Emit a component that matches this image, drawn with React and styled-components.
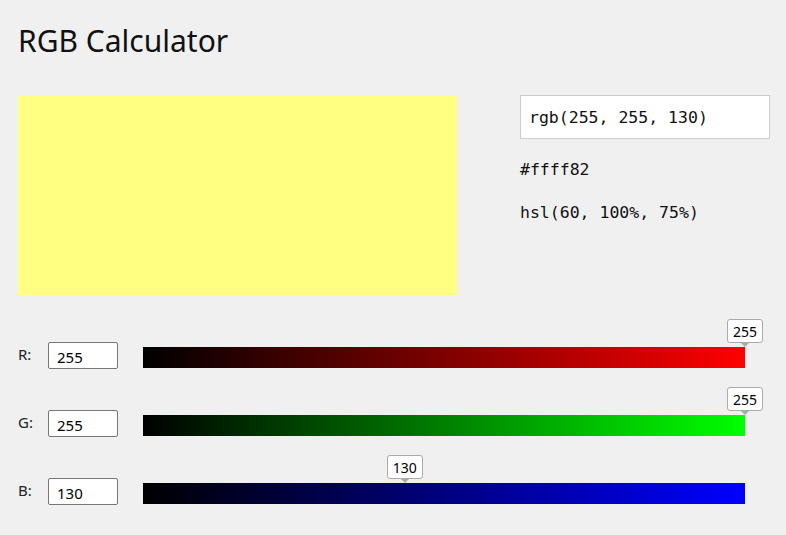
import { PureComponent } from "react";
import styled, { createGlobalStyle } from "styled-components";

const GlobalStyle = createGlobalStyle`
  html, body {
    margin: 0;
    padding: 0;
    background: #f0f0f0;
  }
  body {
    font-family: "Noto Sans", "Open Sans", sans-serif;
    color: #000;
  }
`;

const Page = styled.div`
  padding: 0 0 0 18px;
  width: 786px;
  height: 535px;
  box-sizing: border-box;
  overflow: hidden;
`;

const Title = styled.h1`
  margin: 0;
  padding-top: 21px;
  height: 74px;
  box-sizing: border-box;
  font-size: 30px;
  line-height: 40px;
  font-weight: 400;
  color: #111;
`;

const Top = styled.div`
  display: flex;
  align-items: flex-start;
  gap: 63px;
`;

const Preview = styled.div`
  flex-shrink: 0;
  margin-top: 22px;
  width: 439px;
  height: 199px;
  background: ${(props) => props.color};
`;

const Info = styled.div`
  flex-shrink: 0;
  margin-top: 21px;
  display: flex;
  flex-direction: column;
  font-family: "DejaVu Sans Mono", "Liberation Mono", monospace;
  font-size: 16.5px;
  color: #111;
`;

const RgbBox = styled.div`
  width: 250px;
  height: 44px;
  box-sizing: border-box;
  padding: 0 8px;
  display: flex;
  align-items: center;
  background: #fff;
  border: 1px solid #ccc;
`;

const InfoLine = styled.div`
  height: 43px;
  display: flex;
  align-items: center;
  margin-top: ${(props) => props.first ? "9px" : "0"};
`;

const Sliders = styled.div`
  margin-top: 47px;
  display: flex;
  flex-direction: column;
  gap: 41px;
`;

const Row = styled.div`
  display: flex;
  align-items: center;
  height: 27px;
`;

const Label = styled.span`
  width: 30px;
  font-size: 15px;
  color: #222;
  margin-top: -3px;
`;

const NumInput = styled.input`
  width: 70px;
  height: 27px;
  box-sizing: border-box;
  border: 1px solid #767676;
  border-radius: 2px;
  background: #fff;
  padding: 2px 8px 0;
  font-family: "Noto Sans", "Open Sans", sans-serif;
  font-size: 15px;
  color: #000;
  outline: none;
`;

const Track = styled.div`
  position: relative;
  margin-left: 25px;
  width: 602px;
  height: 21px;
  margin-top: 4px;
  background: linear-gradient(to right, #000, ${(props) => props.end});
`;

const Bubble = styled.div`
  position: absolute;
  bottom: 25px;
  transform: translateX(-50%);
  background: #fff;
  border: 1px solid #aaa;
  border-radius: 3px;
  padding: 0 5px;
  height: 24px;
  box-sizing: border-box;
  display: flex;
  align-items: center;
  font-size: 14px;
  color: #000;

  &::after {
    content: "";
    position: absolute;
    left: 50%;
    bottom: -5px;
    transform: translateX(-50%);
    border-left: 4px solid transparent;
    border-right: 4px solid transparent;
    border-top: 4px solid #aaa;
  }
`;

const channels = [
  { key: "R", value: 255, end: "#ff0000", pos: 100 },
  { key: "G", value: 255, end: "#00ff00", pos: 100 },
  { key: "B", value: 130, end: "#0000ff", pos: 43.5 },
];

export default class App extends PureComponent {
  render() {
    return (
      <Page>
        <GlobalStyle />
        <Title>RGB Calculator</Title>
        <Top>
          <Preview color="#ffff82" />
          <Info>
            <RgbBox>rgb(255, 255, 130)</RgbBox>
            <InfoLine first>#ffff82</InfoLine>
            <InfoLine>hsl(60, 100%, 75%)</InfoLine>
          </Info>
        </Top>
        <Sliders>
          {channels.map((c) => (
            <Row key={c.key}>
              <Label>{c.key}:</Label>
              <NumInput type="text" defaultValue={c.value} />
              <Track end={c.end}>
                <Bubble style={{ left: `${c.pos}%` }}>{c.value}</Bubble>
              </Track>
            </Row>
          ))}
        </Sliders>
      </Page>
    );
  }
}
